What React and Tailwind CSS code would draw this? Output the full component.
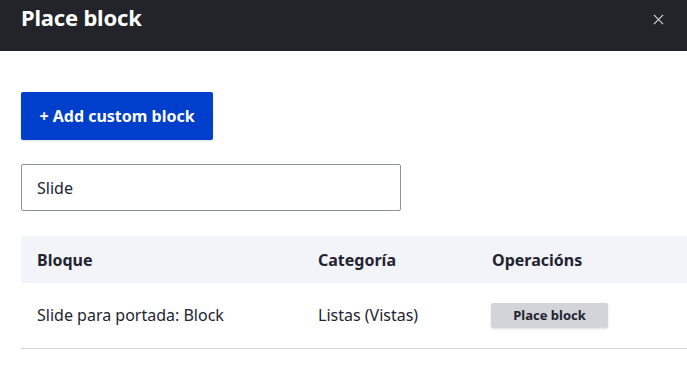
const font = { fontFamily: '"Noto Sans", "Open Sans", sans-serif' }

function CloseIcon() {
  return (
    <svg width="11" height="11" viewBox="0 0 12 12" fill="none" stroke="#d4d4d8" strokeWidth="1.3">
      <path d="M1 1l10 10M11 1L1 11" />
    </svg>
  )
}

export default function App() {
  return (
    <div className="w-[687px] h-[375px] overflow-hidden bg-white text-[#222330]" style={font}>
      <div className="h-[51px] bg-[#232429] flex items-start justify-between pl-[21px] pr-[23px]">
        <h1 className="text-[22px] font-bold text-white leading-none mt-[6px] tracking-[-0.2px]">Place block</h1>
        <button className="mt-[14px]"><CloseIcon /></button>
      </div>

      <div className="pl-[21px] pt-[41px]">
        <button className="h-[48px] w-[192px] bg-[#003ecc] text-white font-bold text-[16px] rounded-[2px] shadow-sm">
          + Add custom block
        </button>

        <div className="mt-[24px] w-[380px] h-[47px] border border-[#8e929c] rounded-[2px] flex items-center px-[15px] text-[16px]">
          Slide
        </div>

        <table className="mt-[25px] w-[666px] text-left text-[16px] border-collapse">
          <thead>
            <tr className="bg-[#f3f4f9] h-[47px]">
              <th className="w-[281px] px-4 font-bold">Bloque</th>
              <th className="w-[174px] px-4 font-bold">Categoría</th>
              <th className="px-4 font-bold">Operacións</th>
            </tr>
          </thead>
          <tbody>
            <tr className="h-[65px] border-b border-[#d3d4d9]">
              <td className="px-4">Slide para portada: Block</td>
              <td className="px-4">Listas (Vistas)</td>
              <td className="px-[15px]">
                <button className="h-[25px] w-[117px] bg-[#d3d4d9] rounded-[2px] text-[13px] font-bold shadow-sm">
                  Place block
                </button>
              </td>
            </tr>
          </tbody>
        </table>
      </div>
    </div>
  )
}
